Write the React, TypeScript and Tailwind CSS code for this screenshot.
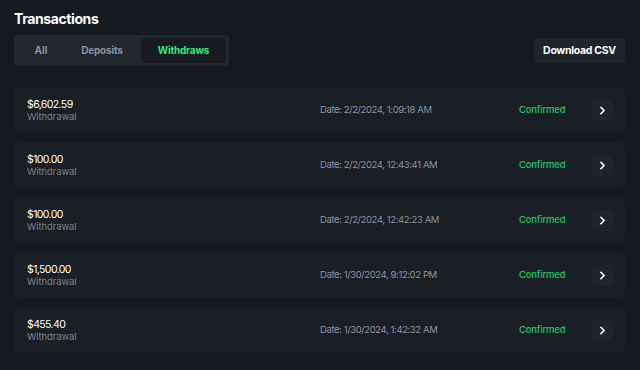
import { ChevronRight } from "lucide-react";

const rows = [
  { amount: "$6,602.59", date: "2/2/2024, 1:09:18 AM" },
  { amount: "$100.00", date: "2/2/2024, 12:43:41 AM" },
  { amount: "$100.00", date: "2/2/2024, 12:42:23 AM" },
  { amount: "$1,500.00", date: "1/30/2024, 9:12:02 PM" },
  { amount: "$455.40", date: "1/30/2024, 1:42:32 AM" },
];

const tabs = ["All", "Deposits", "Withdraws"];

export default function App() {
  return (
    <div className="w-[640px] h-[370px] bg-[#151a21] px-[14px] pt-[9px] font-['Inter',sans-serif] overflow-hidden">
      <h1 className="text-[14px] leading-[19px] font-bold text-white tracking-[-0.4px]">
        Transactions
      </h1>
      <div className="mt-[7px] flex items-center justify-between">
        <div className="flex h-[31px] w-[215px] items-center rounded-[4px] bg-[#22272e] p-[3px]">
          {tabs.map((tab) => {
            const active = tab === "Withdraws";
            return (
              <div
                key={tab}
                className={
                  active
                    ? "flex h-[25px] w-[85px] ml-auto items-center justify-center rounded-[4px] bg-[#181c22] text-[10px] font-bold text-[#2ee876] tracking-[-0.2px]"
                    : tab === "All"
                      ? "flex h-[25px] w-[48px] items-center justify-center text-[10px] font-bold text-[#8a919c]"
                      : "flex h-[25px] w-[74px] items-center justify-center text-[10px] font-bold text-[#8a919c] tracking-[-0.2px]"
                }
              >
                {tab}
              </div>
            );
          })}
        </div>
        <button className="mr-[1px] h-[25px] w-[91px] rounded-[4px] bg-[#1f232a] text-[10.5px] font-bold text-white tracking-[-0.3px]">
          Download CSV
        </button>
      </div>
      <div className="mt-[21px] flex w-[611px] flex-col gap-[9px]">
        {rows.map((row, i) => (
          <div
            key={i}
            className="flex h-[46px] items-center rounded-[6px] bg-[#1a1f26] pl-[13px] pr-[12px]"
          >
            <div className="w-[293px] flex flex-col">
              <span className="text-[10.5px] leading-[13px] text-white tracking-[-0.6px]">
                {row.amount}
              </span>
              <span className="text-[9.5px] leading-[12px] text-[#7b828d] tracking-[-0.1px]">
                Withdrawal
              </span>
            </div>
            <div className="w-[199px] text-[9.5px] text-[#8c939e] tracking-[-0.4px]">
              Date: {row.date}
            </div>
            <div className="w-[73px] text-[9.5px] font-medium text-[#1ec468] tracking-[-0.2px]">
              Confirmed
            </div>
            <div className="flex h-[21px] w-[21px] items-center justify-center rounded-[3px] bg-[#1f232a] text-white">
              <ChevronRight size={13} strokeWidth={3} />
            </div>
          </div>
        ))}
      </div>
    </div>
  );
}
